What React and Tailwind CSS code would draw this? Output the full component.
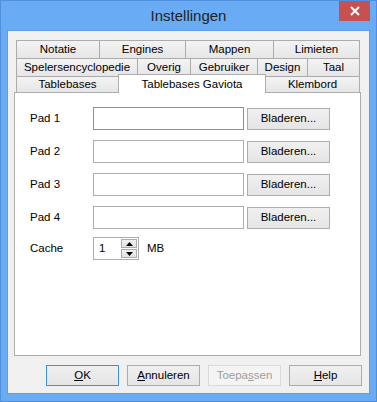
import React from 'react';

const font = { fontFamily: '"Liberation Sans", Arial, sans-serif' };

const Tab = ({ label, className = '' }) => (
    <div className={`flex items-center justify-center border-l border-t border-[#acacac] bg-gradient-to-b from-[#f3f3f3] to-[#e6e6e6] text-[11.5px] text-black ${className}`}>
        {label}
    </div>
);

const Button = ({ children, focused = false, disabled = false }) => {
    let look = 'border-[#adadad] bg-gradient-to-b from-[#f0f0f0] to-[#e5e5e5] text-black';
    if (disabled) look = 'border-[#d9d9d9] bg-[#f4f4f4] text-[#9d9d9d]';
    if (focused) look = 'border-[#3c8ee6] bg-gradient-to-b from-[#f0f0f0] to-[#e5e5e5] text-black';
    return (
        <button className={`h-[21px] w-[73px] border text-[11.5px] leading-none ${look}`}>
            {children}
        </button>
    );
};

const PathRow = ({ label, focused }) => (
    <div className="flex items-center">
        <span className="w-[63px] text-[11.5px] text-black">{label}</span>
        <div className={`h-[23px] w-[151px] bg-white border ${focused ? 'border-[#569de5]' : 'border-[#abadb3]'}`} />
        <button className="ml-[3px] h-[22px] w-[83px] border border-[#adadad] bg-gradient-to-b from-[#f0f0f0] to-[#e5e5e5] text-[11.5px] text-black">
            Bladeren...
        </button>
    </div>
);

const SpinButton = ({ up }) => (
    <div className="flex h-[9px] w-[16px] items-center justify-center border border-[#acacac] bg-gradient-to-b from-[#f2f2f2] to-[#e2e2e2]">
        <svg width="7" height="4" viewBox="0 0 7 4">
            {up ? <polygon points="0,4 7,4 3.5,0" fill="#000" /> : <polygon points="0,0 7,0 3.5,4" fill="#000" />}
        </svg>
    </div>
);

export default function App() {
    return (
        <div style={font} className="flex h-[402px] w-[377px] flex-col border border-[#4f8fdc] bg-[#6aabf5]">
            {/* title bar */}
            <div className="flex h-[29px] items-start">
                <div className="w-[37px]" />
                <div className="flex h-[29px] flex-1 items-center justify-center pt-[1px] text-[15px] text-[#222]">
                    Instellingen
                </div>
                <div className="mr-[6px] flex h-[20px] w-[31px] items-center justify-center bg-[#c75050]">
                    <svg width="10" height="10" viewBox="0 0 10 10">
                        <path d="M1 1 L9 9 M9 1 L1 9" stroke="#fff" strokeWidth="2" />
                    </svg>
                </div>
            </div>

            {/* client */}
            <div className="mx-[6px] mb-[7px] flex flex-1 flex-col border border-[#5a9ee8] bg-[#f0f0f0]">
                <div className="ml-[8px] mt-[9px] w-[344px]">
                    <div className="flex h-[18px]">
                        <Tab label="Notatie" className="w-[83px]" />
                        <Tab label="Engines" className="w-[86px]" />
                        <Tab label="Mappen" className="w-[88px]" />
                        <Tab label="Limieten" className="flex-1 border-r" />
                    </div>
                    <div className="flex h-[18px]">
                        <Tab label="Spelersencyclopedie" className="w-[121px]" />
                        <Tab label="Overig" className="w-[53px]" />
                        <Tab label="Gebruiker" className="w-[67px]" />
                        <Tab label="Design" className="w-[50px]" />
                        <Tab label="Taal" className="flex-1 border-r" />
                    </div>
                    <div className="flex h-[16px] items-end">
                        <Tab label="Tablebases" className="h-[16px] w-[102px]" />
                        <div className="relative z-10 -mb-[1px] flex h-[19px] w-[148px] items-start justify-center border-x border-t border-[#acacac] bg-white pt-[1px] text-[11.5px] text-black">
                            Tablebases Gaviota
                        </div>
                        <Tab label="Klembord" className="h-[16px] flex-1 border-l-0 border-r" />
                    </div>
                </div>

                {/* panel */}
                <div className="ml-[6px] flex h-[264px] w-[347px] flex-col gap-[10px] border border-[#acacac] bg-white pl-[15px] pt-[14px]">
                    <PathRow label="Pad 1" focused />
                    <PathRow label="Pad 2" />
                    <PathRow label="Pad 3" />
                    <PathRow label="Pad 4" />
                    <div className="-mt-[2px] flex items-center">
                        <span className="w-[63px] text-[11.5px] text-black">Cache</span>
                        <div className="flex h-[23px] w-[46px] items-center border border-[#abadb3] bg-white">
                            <span className="flex-1 pl-[5px] text-[11.5px] text-black">1</span>
                            <div className="mr-[1px] flex flex-col gap-[1px]">
                                <SpinButton up />
                                <SpinButton />
                            </div>
                        </div>
                        <span className="ml-[8px] text-[11.5px] text-black">MB</span>
                    </div>
                </div>

                {/* buttons */}
                <div className="mt-[9px] flex gap-[8px] pl-[38px]">
                    <Button focused><u>O</u>K</Button>
                    <Button><u>A</u>nnuleren</Button>
                    <Button disabled>Toepa<u>s</u>sen</Button>
                    <Button><u>H</u>elp</Button>
                </div>
            </div>
        </div>
    );
}
